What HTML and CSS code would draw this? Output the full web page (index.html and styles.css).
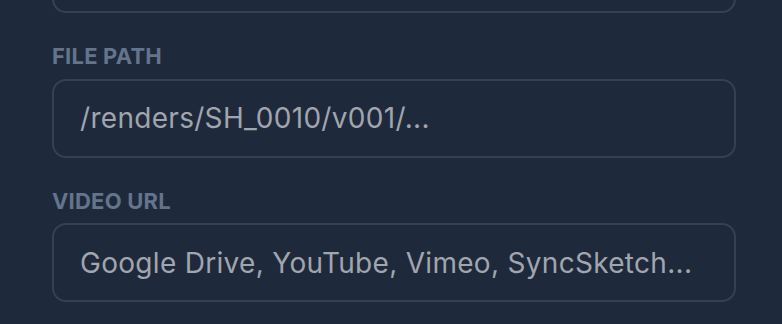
FILE: index.html
```html
<!DOCTYPE html>
<html>
<head>
<meta charset="utf-8">
<link rel="stylesheet" href="styles.css">
</head>
<body>
<div class="form">
  <div class="field">
    <input class="input" type="text" placeholder="">
  </div>
  <div class="field">
    <label class="label">FILE PATH</label>
    <input class="input" type="text" placeholder="/renders/SH_0010/v001/...">
  </div>
  <div class="field">
    <label class="label">VIDEO URL</label>
    <input class="input" type="text" placeholder="Google Drive, YouTube, Vimeo, SyncSketch...">
  </div>
</div>
</body>
</html>
```
FILE: styles.css
```css
html, body {
  margin: 0;
  padding: 0;
  background: #1e293b;
  height: 100%;
  overflow: hidden;
}
body {
  font-family: Inter, "Liberation Sans", sans-serif;
}
.form {
  margin-top: -66px;
  padding: 0 46px 0 52px;
  display: flex;
  flex-direction: column;
  gap: 29px;
}
.field {
  display: flex;
  flex-direction: column;
  gap: 8.5px;
}
.label {
  font-size: 22px;
  line-height: 28px;
  font-weight: 700;
  color: #64748b;
  letter-spacing: 0.2px;
}
.input {
  box-sizing: border-box;
  height: 79px;
  width: 100%;
  margin: 0;
  border: 2px solid #334155;
  border-radius: 14px;
  background: transparent;
  padding: 0 26px;
  font-family: Inter, "Liberation Sans", sans-serif;
  font-size: 28px;
  letter-spacing: 0.3px;
  color: #cbd5e1;
  outline: none;
}
.input::placeholder {
  color: #a1a5ad;
  opacity: 1;
}
```
